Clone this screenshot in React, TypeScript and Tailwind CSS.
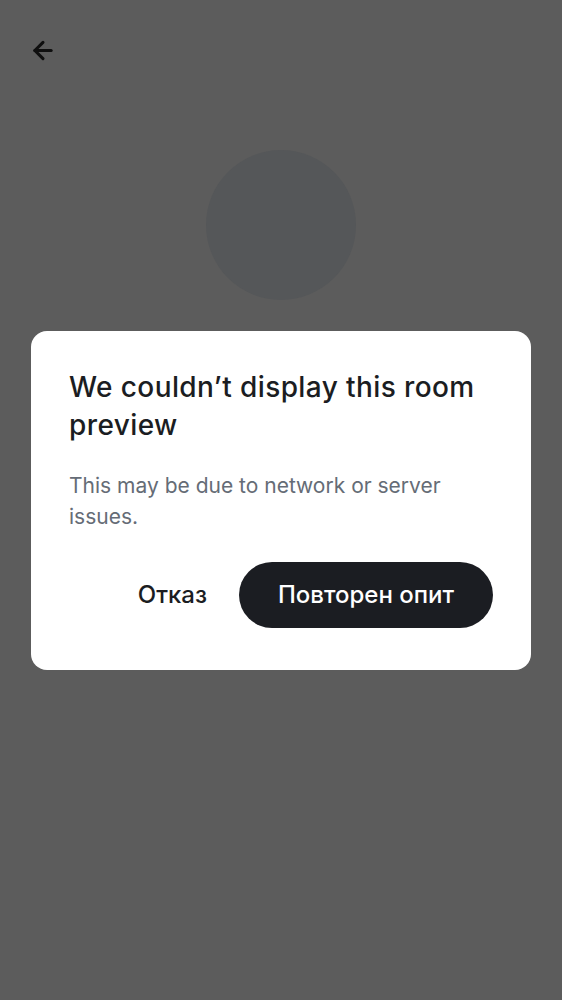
import { ArrowLeft } from 'lucide-react';

export default function App() {
    return (
        <div className="relative h-[1000px] w-full overflow-hidden bg-[#5c5c5c]" style={{ fontFamily: 'Inter, Roboto, sans-serif' }}>
            {/* page underneath the scrim */}
            <div className="px-[29px] pt-[36px]">
                <button className="flex h-[28px] w-[28px] items-center justify-center text-[#0f0f0f]">
                    <ArrowLeft size={29} strokeWidth={2.6} />
                </button>
            </div>
            <div className="mt-[86px] flex justify-center">
                <div className="h-[150px] w-[150px] rounded-full bg-[#555759]" />
            </div>

            {/* dialog */}
            <div className="absolute inset-0 flex items-center justify-center" role="dialog" aria-modal="true">
                <div className="w-[500px] rounded-[16px] bg-white px-[38px] pt-[37px] pb-[42px]">
                    <h2 className="text-[28px] leading-[38px] font-medium tracking-[0.4px] text-[#1b1d22]">
                        We couldn’t display this room preview
                    </h2>
                    <p className="mt-[26px] text-[21px] leading-[31px] text-[#656c76]">
                        This may be due to network or server issues.
                    </p>
                    <div className="mt-[30px] flex items-center justify-end gap-[16px]">
                        <button className="h-[66px] px-[16px] text-[24px] font-medium text-[#1b1d22]">Отказ</button>
                        <button className="h-[66px] w-[254px] rounded-full bg-[#1b1d22] text-[24px] font-medium text-white">
                            Повторен опит
                        </button>
                    </div>
                </div>
            </div>
        </div>
    );
}
